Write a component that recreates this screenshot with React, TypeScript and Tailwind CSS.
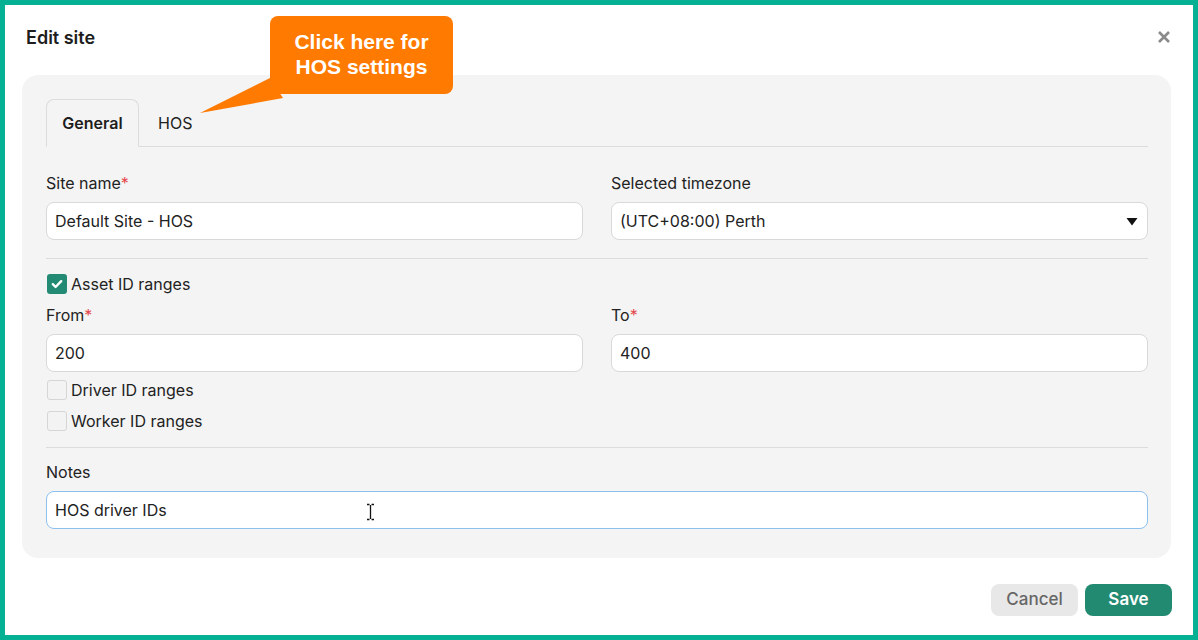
import { useState } from "react";

type FieldProps = {
    label: string;
    required?: boolean;
    children: React.ReactNode;
};

function Field({ label, required, children }: FieldProps) {
    return (
        <div className="flex flex-col">
            <label className="h-5 text-[16px] leading-5 text-[#222]">
                {label}
                {required && <span className="text-[#e5484d]">*</span>}
            </label>
            <div className="mt-[9px]">{children}</div>
        </div>
    );
}

function TextInput({ value, focused }: { value: string; focused?: boolean }) {
    return (
        <div
            className={`relative h-[38px] flex items-center px-[8px] bg-white rounded-lg border text-[16px] text-[#222] ${
                focused ? "border-[#8cc0ee]" : "border-[#d9d9d9]"
            }`}
        >
            {value}
            {focused && (
                <svg className="absolute left-[319px] top-[11px]" width="9" height="18" viewBox="0 0 9 18">
                    <path d="M1 1.5h2.5M5.5 1.5H8M4.5 2v14M1 16.5h2.5M5.5 16.5H8" stroke="#111" strokeWidth="1.3" fill="none" />
                </svg>
            )}
        </div>
    );
}

function Checkbox({ checked, label }: { checked?: boolean; label: string }) {
    return (
        <div className="flex items-center h-5 gap-[4px]">
            {checked ? (
                <span className="ml-px w-5 h-5 rounded-[3px] bg-[#238a73] flex items-center justify-center">
                    <svg width="12" height="10" viewBox="0 0 12 10">
                        <path d="M1.8 5.2 4.6 8 10.2 2.2" stroke="white" strokeWidth="2.4" fill="none" strokeLinecap="round" strokeLinejoin="round" />
                    </svg>
                </span>
            ) : (
                <span className="ml-px w-5 h-5 rounded-[3px] border border-[#d6d6d6] bg-[#f3f3f3]" />
            )}
            <span className="text-[16px] text-[#222]">{label}</span>
        </div>
    );
}

export default function App() {
    const [tab, setTab] = useState<"general" | "hos">("general");

    return (
        <div
            className="relative w-[1198px] h-[640px] border-[5px] border-[#06b092] bg-white pl-[17px] pr-[22px] overflow-hidden"
            style={{ fontFamily: "Inter, 'Noto Sans', sans-serif" }}
        >
            <div className="h-[64px] flex items-center justify-between">
                <h1 className="pl-1 text-[18px] font-semibold text-[#1d1d1d]">Edit site</h1>
                <button className="-mr-[4px] p-1 text-[#8a8a8a]">
                    <svg width="14" height="14" viewBox="0 0 14 14">
                        <path d="M2 2l10 10M12 2 2 12" stroke="currentColor" strokeWidth="2.6" />
                    </svg>
                </button>
            </div>

            <div className="mt-[6px] h-[483px] rounded-2xl bg-[#f4f4f4] pt-6 pl-6 pr-[23px]">
                <div className="flex border-b border-[#dcdcdc] h-[48px]">
                    <button
                        onClick={() => setTab("general")}
                        className={`w-[93px] h-[48px] -mb-px rounded-t-lg text-[16px] ${
                            tab === "general"
                                ? "border border-b-[#f4f4f4] border-[#dcdcdc] font-semibold text-[#1d1d1d]"
                                : "text-[#222]"
                        }`}
                    >
                        General
                    </button>
                    <button
                        onClick={() => setTab("hos")}
                        className={`px-[19px] h-[48px] -mb-px rounded-t-lg text-[16px] ${
                            tab === "hos"
                                ? "border border-b-[#f4f4f4] border-[#dcdcdc] font-semibold text-[#1d1d1d]"
                                : "text-[#222]"
                        }`}
                    >
                        HOS
                    </button>
                </div>

                <div className="grid grid-cols-2 gap-x-[28px] mt-[26px]">
                    <Field label="Site name" required>
                        <TextInput value="Default Site - HOS" />
                    </Field>
                    <Field label="Selected timezone">
                        <div className="h-[38px] flex items-center justify-between px-[8px] bg-white rounded-lg border border-[#d9d9d9] text-[16px] text-[#222]">
                            (UTC+08:00) Perth
                            <svg width="12" height="9" viewBox="0 0 12 9" className="mr-[1px]">
                                <path d="M0.5 1h11L6 8.5z" fill="#111" />
                            </svg>
                        </div>
                    </Field>
                </div>

                <div className="mt-[18px] border-t border-[#dcdcdc]" />

                <div className="mt-[15px]">
                    <Checkbox checked label="Asset ID ranges" />
                </div>

                <div className="grid grid-cols-2 gap-x-[28px] mt-[11px]">
                    <Field label="From" required>
                        <TextInput value="200" />
                    </Field>
                    <Field label="To" required>
                        <TextInput value="400" />
                    </Field>
                </div>

                <div className="mt-[8px] flex flex-col gap-[11px]">
                    <Checkbox label="Driver ID ranges" />
                    <Checkbox label="Worker ID ranges" />
                </div>

                <div className="mt-[16px] border-t border-[#dcdcdc]" />

                <div className="mt-[14px]">
                    <Field label="Notes">
                        <TextInput value="HOS driver IDs" focused />
                    </Field>
                </div>
            </div>

            <div className="mt-[26px] flex justify-end gap-[7px] -mr-px">
                <button className="w-[87px] h-[32px] rounded-lg bg-[#e8e8e8] text-[17px] text-[#666] font-medium">
                    Cancel
                </button>
                <button className="w-[87px] h-[32px] rounded-lg bg-[#238a72] text-[17px] text-white font-semibold">
                    Save
                </button>
            </div>

            <div className="absolute left-[265px] top-[11px]" style={{ fontFamily: "'Liberation Sans', Arial, sans-serif" }}>
                <svg className="absolute left-[-75px] top-[55px]" width="90" height="45" viewBox="0 0 90 45">
                    <path d="M75 7 5 42 88 27z" fill="#ff7a00" />
                </svg>
                <div className="relative w-[183px] h-[78px] pb-[2px] rounded-lg bg-[#ff7a00] flex items-center justify-center text-center text-white font-bold text-[21px] leading-[25px]">
                    Click here for
                    <br />
                    HOS settings
                </div>
            </div>
        </div>
    );
}
